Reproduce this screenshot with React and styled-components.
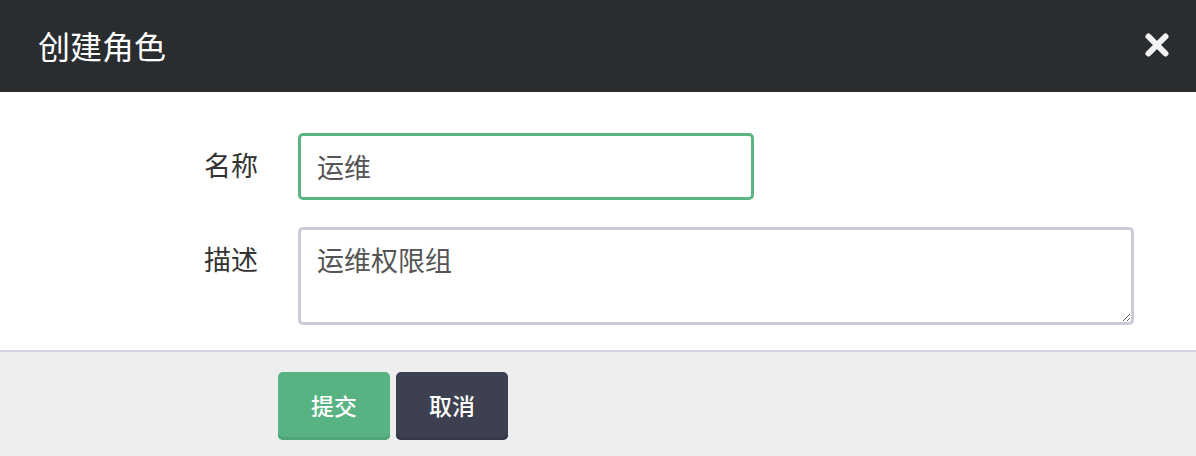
import React from "react";
import styled, { createGlobalStyle } from "styled-components";

const Global = createGlobalStyle`
  html, body { margin: 0; padding: 0; background: #ffffff; }
  body { font-family: "Noto Sans CJK SC", "Noto Sans", sans-serif; }
  * { box-sizing: border-box; }
`;

const Dialog = styled.div`
  width: 1196px;
  height: 456px;
  display: flex;
  flex-direction: column;
  background: #ffffff;
`;

const Header = styled.header`
  height: 92px;
  flex: none;
  background: #2a2d2f;
  display: flex;
  align-items: center;
  justify-content: space-between;
  padding: 0 26px 0 38px;
`;

const Title = styled.h1`
  margin: 0;
  color: #ffffff;
  font-size: 32px;
  font-weight: 400;
  line-height: 1;
  padding-bottom: 2px;
`;

const CloseButton = styled.button`
  border: 0;
  background: transparent;
  padding: 0;
  width: 26px;
  height: 26px;
  display: flex;
  cursor: pointer;
  margin-bottom: 2px;
`;

const Body = styled.div`
  display: grid;
  grid-template-columns: 258px 1fr;
  column-gap: 40px;
  row-gap: 27px;
  padding: 41px 62px 25px 0;
  border-bottom: 2px solid #d6d3e2;
  align-items: start;
`;

const Label = styled.label`
  justify-self: end;
  font-size: 27px;
  color: #333333;
  line-height: 36px;
  padding-top: ${(p) => p.$top}px;
`;

const fieldBase = `
  font-family: "Noto Sans CJK SC", "Noto Sans", sans-serif;
  font-size: 27px;
  color: #555555;
  background: #ffffff;
  border-width: 3px;
  border-style: solid;
  border-radius: 5px;
  outline: none;
  padding-left: 16px;
`;

const TextInput = styled.input`
  ${fieldBase}
  width: 456px;
  height: 67px;
  border-color: #5ab484;
  line-height: 36px;
`;

const TextArea = styled.textarea`
  ${fieldBase}
  width: 836px;
  height: 98px;
  border-color: #cccad9;
  line-height: 36px;
  padding-top: 12px;
  resize: vertical;
`;

const Footer = styled.footer`
  flex: 1;
  background: #eeeeee;
  display: flex;
  gap: 6px;
  padding: 20px 0 0 278px;
  align-items: flex-start;
`;

const Button = styled.button`
  width: 112px;
  height: 68px;
  border: 0;
  border-radius: 5px;
  font-family: "Noto Sans CJK SC", "Noto Sans", sans-serif;
  font-size: 23px;
  font-weight: 500;
  color: #ffffff;
  background: ${(p) => (p.$variant === "primary" ? "#57b382" : "#3d4050")};
  box-shadow: inset 0 -3px 0
    ${(p) => (p.$variant === "primary" ? "#4ea676" : "#363846")};
  padding: 0 0 3px;
  cursor: pointer;
`;

export default function App() {
  return (
    <>
      <Global />
      <Dialog>
        <Header>
          <Title>创建角色</Title>
          <CloseButton aria-label="close">
            <svg width="26" height="26" viewBox="0 0 26 26">
              <path
                d="M4.5 4.5 L21.5 21.5 M21.5 4.5 L4.5 21.5"
                stroke="#f2f2f2"
                strokeWidth="6"
                strokeLinecap="round"
              />
            </svg>
          </CloseButton>
        </Header>
        <Body>
          <Label $top={14}>名称</Label>
          <TextInput defaultValue="运维" />
          <Label $top={14}>描述</Label>
          <TextArea defaultValue="运维权限组" />
        </Body>
        <Footer>
          <Button $variant="primary">提交</Button>
          <Button $variant="secondary">取消</Button>
        </Footer>
      </Dialog>
    </>
  );
}
